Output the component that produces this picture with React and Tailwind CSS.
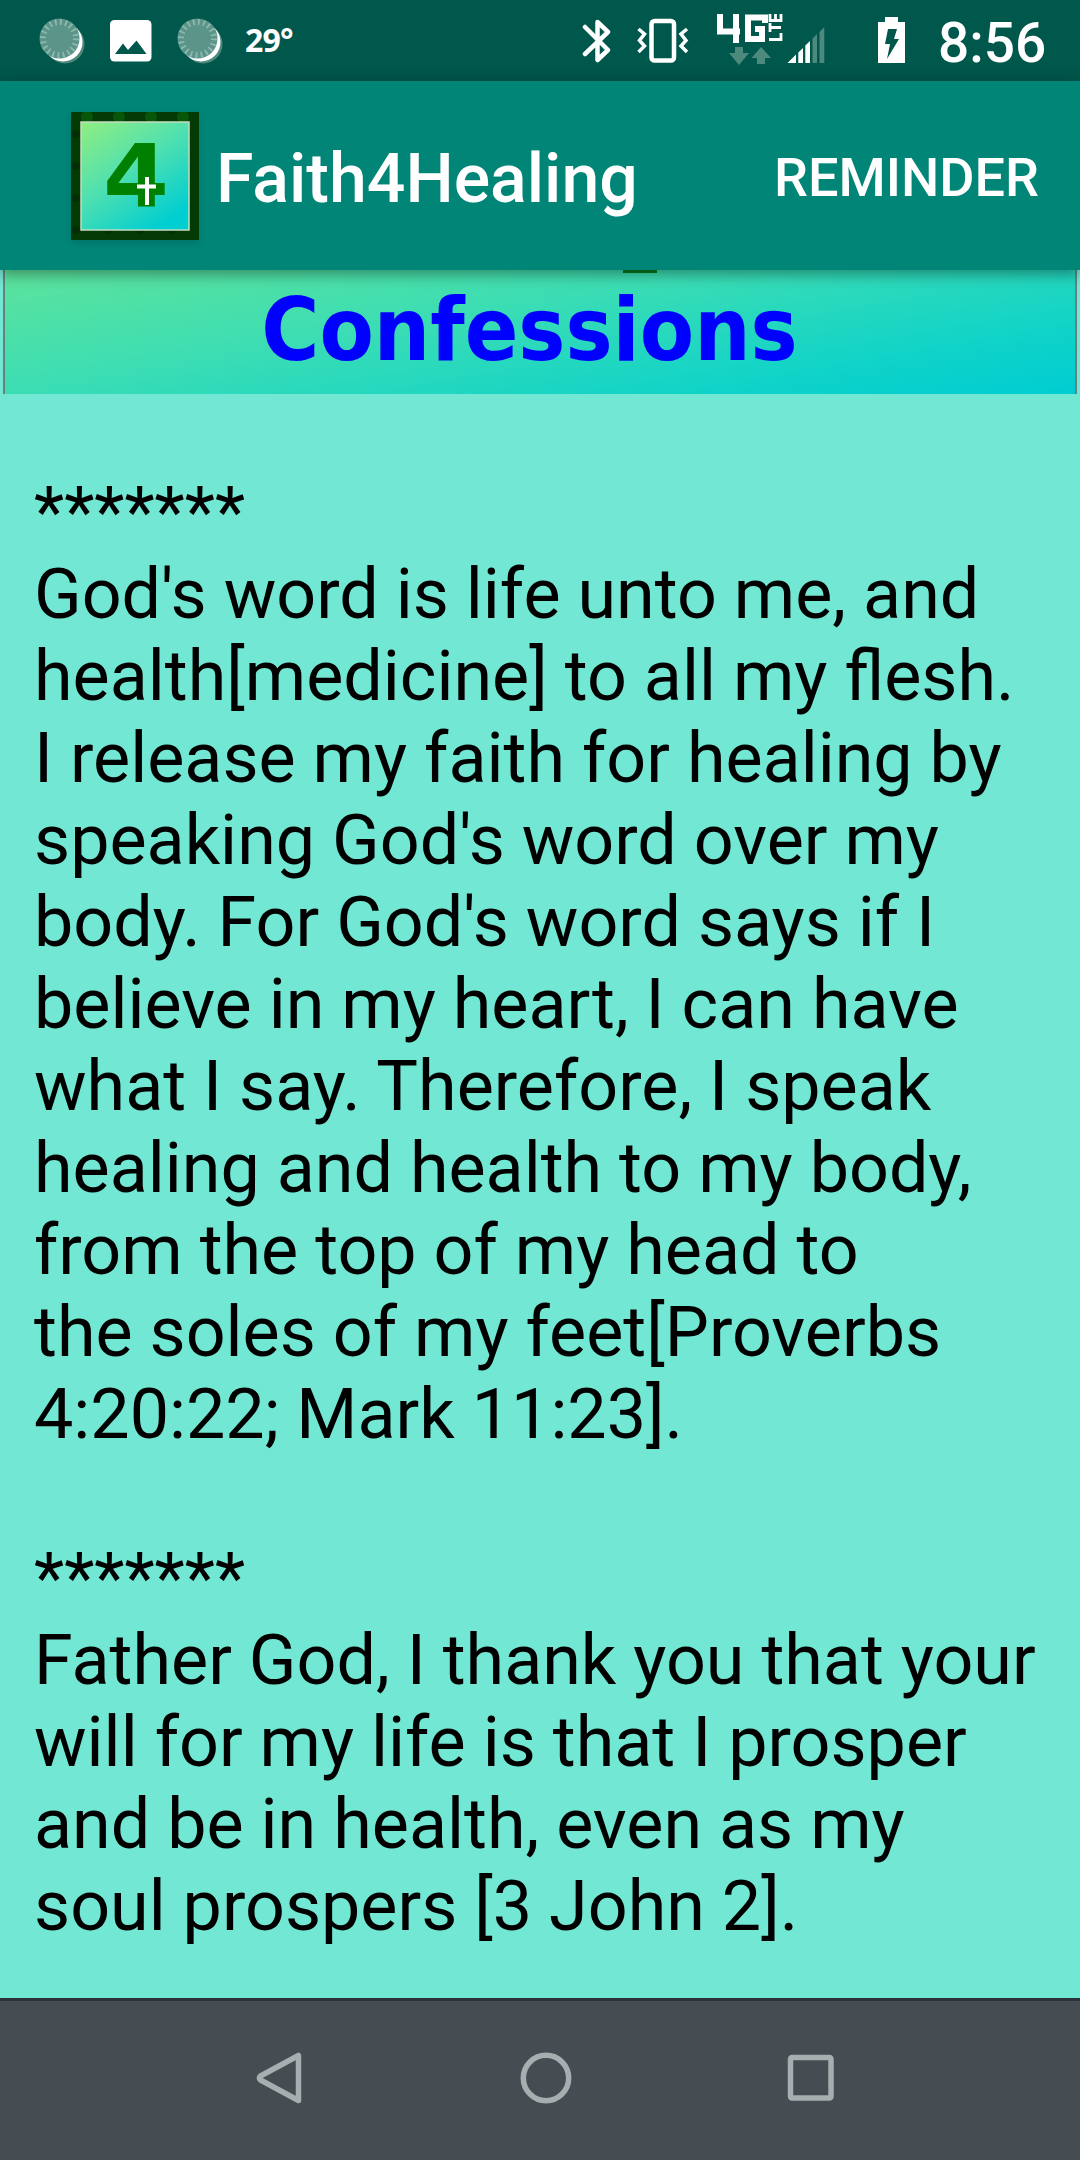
import React from "react";

const confessions = [
  [
    "God's word is life unto me, and",
    "health[medicine] to all my flesh.",
    "I release my faith for healing by",
    "speaking God's word over my",
    "body. For God's word says if I",
    "believe in my heart, I can have",
    "what I say. Therefore, I speak",
    "healing and health to my body,",
    "from the top of my head to",
    "the soles of my feet[Proverbs",
    "4:20:22; Mark 11:23].",
  ],
  [
    "Father God, I thank you that your",
    "will for my life is that I prosper",
    "and be in health, even as my",
    "soul prospers [3 John 2].",
  ],
];

const SyncIcon = ({ className }) => (
  <svg viewBox="0 0 46 46" className={`h-[46px] w-[46px] shrink-0 ${className}`}>
    <circle cx="26" cy="26" r="19.5" fill="#4d8a7d" />
    <circle cx="24" cy="24" r="19.5" fill="#fff" />
    <circle cx="20.5" cy="20.5" r="20" fill="#5b9488" />
    <circle
      cx="20.5"
      cy="20.5"
      r="16.5"
      fill="none"
      stroke="#8fb8af"
      strokeWidth="6"
      strokeDasharray="1.8 3.384"
    />
  </svg>
);

const StatusBar = () => (
  <div className="flex h-[81px] shrink-0 items-start bg-[#00574b] text-white">
    <SyncIcon className="ml-[39px] mt-[18px]" />
    <svg viewBox="0 0 42 42" className="ml-[25px] mt-5 h-[42px] w-[42px] shrink-0">
      <rect width="41.5" height="41.5" rx="4.5" fill="#fff" />
      <path d="M5 34 13 23.5 18 30 26.500 20.500 36.500 34Z" fill="#00574b" />
    </svg>
    <SyncIcon className="ml-[25px] mt-[18px]" />
    <span className="ml-[22px] mt-[18px] w-[60px] font-['Noto_Sans'] text-[32px] leading-[44px] font-bold tracking-[-0.8px]">
      29°
    </span>

    <svg viewBox="0 0 30 46" className="ml-[277px] mt-[18px] h-[46px] w-[30px] shrink-0">
      <path
        d="M3 9 26 32 15.500 42V4L26 14 3 36"
        fill="none"
        stroke="#fff"
        strokeWidth="4.5"
        strokeLinejoin="round"
        strokeLinecap="round"
      />
    </svg>
    <svg viewBox="0 0 52 46" className="ml-[25px] mt-[18px] h-[46px] w-[52px] shrink-0">
      <g fill="none" stroke="#fff">
        <rect x="14.500" y="3" width="22.500" height="39.500" rx="3" strokeWidth="4.500" />
        <path d="M1.500 11 7.500 16 2.500 22.500 7.500 28 1.500 34M50 11 44 16 49 22.500 44 28 50 34" strokeWidth="3.500" />
      </g>
    </svg>
    <svg viewBox="0 0 110 52" className="ml-[27px] mt-[13px] h-[52px] w-[110px] shrink-0">
      <g fill="none" stroke="#fff" strokeWidth="6">
        <path d="M4 1V18.500H24M20 1V30" />
        <path d="M49 10V4.500H32V26H46V16H39" />
      </g>
      <g fill="none" stroke="#fff" strokeWidth="2.800">
        <path d="M53 26.500H65V20M53 14.500H65M54 19V10M54 1V7.500H65V1M59.500 1V7.500" />
      </g>
      <g fill="#4d8a7d">
        <path d="M19 34h8v6h6L23 52 13 40h6z" />
        <path d="M41 51h8V45h6L45 34 35.500 45H41z" />
        <path d="M96.500 25.500 101 21V50H96.500zM103.500 19 108.300 14V50H103.500z" />
      </g>
      <path d="M71.500 50 80 41.500V50zM82.300 39.500 87 35V50H82.300zM89.300 32.500 94 28V50H89.300z" fill="#fff" />
    </svg>
    <svg viewBox="0 0 28 46" className="ml-[52px] mt-[17px] h-[46px] w-[28px] shrink-0">
      <path d="M7 0H20V5H27V46H0V5H7z" fill="#fff" />
      <path d="M10 12H19L16 22H21L9 42 12 27H7z" fill="#00574b" />
    </svg>
    <span className="ml-[32px] mt-[10px] font-[Roboto] text-[55px] leading-[66px] font-medium">
      8:56
    </span>
  </div>
);

const Logo = () => (
  <svg viewBox="0 0 128 128" className="ml-[71px] h-[128px] w-[128px] shrink-0 drop-shadow-md">
    <defs>
      <linearGradient id="tile" x1="0" y1="0" x2="0.7" y2="1">
        <stop offset="0" stopColor="#90ee80" />
        <stop offset="0.5" stopColor="#50e0b0" />
        <stop offset="1" stopColor="#00ced1" />
      </linearGradient>
      <pattern id="leaf" width="32" height="32" patternUnits="userSpaceOnUse">
        <rect width="32" height="32" fill="#043b05" />
        <circle cx="16" cy="5" r="6" fill="#07560a" />
        <circle cx="5" cy="22" r="4" fill="#032d04" />
      </pattern>
    </defs>
    <rect width="128" height="128" fill="url(#leaf)" />
    <rect x="10" y="10" width="108" height="108" fill="url(#tile)" stroke="#c3dcc2" strokeWidth="1.500" />
    <text
      x="32"
      y="95"
      fill="#008000"
      fontFamily="DejaVu Sans"
      fontWeight="bold"
      fontSize="88"
      textLength="66"
      lengthAdjust="spacingAndGlyphs"
    >
      4
    </text>
    <path d="M66 74.500H85M76 65V93" stroke="#fff" strokeWidth="4" />
  </svg>
);

const AppBar = () => (
  <header className="relative z-10 flex h-[189px] shrink-0 items-center bg-[#008577] text-white shadow-[0_4px_14px_rgba(0,0,0,0.4)]">
    <Logo />
    <h1 className="ml-[17px] mt-[6px] font-[Roboto] text-[68px] leading-[82px] font-medium">
      Faith4Healing
    </h1>
    <button className="mt-[4px] mr-[41px] ml-auto font-[Roboto] text-[54px] leading-[66px] font-medium">
      REMINDER
    </button>
  </header>
);

const Banner = () => (
  <div className="relative mr-[3px] ml-[3px] flex h-[124px] shrink-0 justify-center border-x-2 border-[#68817f] bg-[linear-gradient(170deg,#5de39c_0%,#3bddb4_40%,#10d3c8_78%,#00cdd2_100%)]">
    <div className="absolute top-0 left-[618px] h-[3px] w-[34px] bg-[#007d18]" />
    <span className="mr-[21px] font-['DejaVu_Sans_Condensed','DejaVu_Sans'] text-[88px] leading-[119px] font-bold text-[#0000ff]">
      Confessions
    </span>
  </div>
);

const NavBar = () => (
  <nav className="flex h-[162px] shrink-0 items-center border-t-[3px] border-[#2a3138] bg-[#454c52] pb-[6px] text-[#a8adaf]">
    <svg viewBox="0 0 54 54" className="ml-[252px] h-[54px] w-[54px]" fill="none" stroke="currentColor" strokeWidth="5.500">
      <path d="M46.500 4.500V49.500L8.500 29Q6.500 27 8.500 25Z" strokeLinejoin="round" />
    </svg>
    <svg viewBox="0 0 54 54" className="ml-[213px] h-[54px] w-[54px]" fill="none" stroke="currentColor" strokeWidth="5.500">
      <circle cx="27" cy="27" r="22.700" />
    </svg>
    <svg viewBox="0 0 54 54" className="ml-[211px] h-[54px] w-[54px]" fill="none" stroke="currentColor" strokeWidth="5.500">
      <rect x="6.500" y="6.500" width="40.500" height="40.500" rx="1.500" />
    </svg>
  </nav>
);

const App = () => {
  return (
    <div className="flex h-[2160px] w-[1080px] flex-col overflow-hidden bg-[#72e7d3]">
      <StatusBar />
      <AppBar />
      <Banner />
      <main className="min-h-0 flex-1 overflow-hidden pt-[77px] pl-[34px] font-[Roboto] text-[70px] leading-[82px] [word-spacing:-0.4px] whitespace-nowrap text-black">
        {confessions.map((lines, index) => (
          <section key={index} className="mb-[82px]">
            <p>*******</p>
            {lines.map((line) => (
              <p key={line}>{line}</p>
            ))}
          </section>
        ))}
      </main>
      <NavBar />
    </div>
  );
};

export default App;
